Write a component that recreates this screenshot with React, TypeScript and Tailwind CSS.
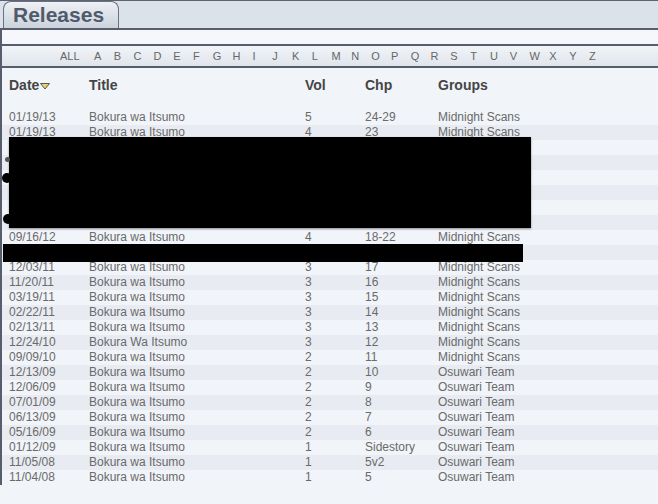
// Manga releases table with letter index and redacted rows.
const letters = 'ABCDEFGHIJKLMNOPQRSTUVWXYZ'.split('')

type Row = { date: string; title: string; vol: string; chp: string; group: string }

const MS = 'Midnight Scans'
const OT = 'Osuwari Team'
const BW = 'Bokura wa Itsumo'

const blank: Row = { date: '', title: '', vol: '', chp: '', group: '' }

const rows: Row[] = [
  { date: '01/19/13', title: BW, vol: '5', chp: '24-29', group: MS },
  { date: '01/19/13', title: BW, vol: '4', chp: '23', group: MS },
  blank,
  blank,
  blank,
  blank,
  blank,
  blank,
  { date: '09/16/12', title: BW, vol: '4', chp: '18-22', group: MS },
  blank,
  { date: '12/03/11', title: BW, vol: '3', chp: '17', group: MS },
  { date: '11/20/11', title: BW, vol: '3', chp: '16', group: MS },
  { date: '03/19/11', title: BW, vol: '3', chp: '15', group: MS },
  { date: '02/22/11', title: BW, vol: '3', chp: '14', group: MS },
  { date: '02/13/11', title: BW, vol: '3', chp: '13', group: MS },
  { date: '12/24/10', title: 'Bokura Wa Itsumo', vol: '3', chp: '12', group: MS },
  { date: '09/09/10', title: BW, vol: '2', chp: '11', group: MS },
  { date: '12/13/09', title: BW, vol: '2', chp: '10', group: OT },
  { date: '12/06/09', title: BW, vol: '2', chp: '9', group: OT },
  { date: '07/01/09', title: BW, vol: '2', chp: '8', group: OT },
  { date: '06/13/09', title: BW, vol: '2', chp: '7', group: OT },
  { date: '05/16/09', title: BW, vol: '2', chp: '6', group: OT },
  { date: '01/12/09', title: BW, vol: '1', chp: 'Sidestory', group: OT },
  { date: '11/05/08', title: BW, vol: '1', chp: '5v2', group: OT },
  { date: '11/04/08', title: BW, vol: '1', chp: '5', group: OT },
]

export default function App() {
  return (
    <div className="relative h-[504px] w-[658px] overflow-hidden bg-[#f1f4f9] font-['Liberation_Sans',Arial,sans-serif]">
      {/* Tab bar */}
      <div className="flex h-[28px] items-end border-t border-[#5d6372] bg-[#dce2ea] pl-[3px]">
        <div className="h-[27px] w-[116px] rounded-t-[8px] border border-b-0 border-[#6b7180] bg-gradient-to-b from-[#eef1f5] to-[#cbd3dd] pl-[9px] text-[21px] font-bold leading-[26px] text-[#505a6a]">
          Releases
        </div>
      </div>
      <div className="h-[2px] bg-[#575d6b]" />

      <div className="border-l-2 border-[#575d6b]">
        <div className="h-[14px] bg-[#f5f7fc]" />
        <div className="h-[2px] bg-[#575d6b]" />

        {/* Letter index */}
        <div className="flex h-[20px] items-center bg-gradient-to-b from-[#f1f4f8] to-[#e0e5ec] pl-[58px] text-[11px] text-[#666]">
          <span className="w-[34px]">ALL</span>
          {letters.map((l) => (
            <span key={l} className="w-[19.8px]">
              {l}
            </span>
          ))}
        </div>
        <div className="h-[2px] bg-[#575d6b]" />

        {/* Column headers */}
        <div className="flex h-[42px] items-start pl-[7px] pt-[9px] text-[14px] font-bold leading-[16px] text-[#454545]">
          <div className="flex w-[80px] items-center">
            Date
            <svg width="10" height="7" viewBox="0 0 10 7" className="ml-[1px] mt-[2px]">
              <polygon points="0.5,0.5 9.5,0.5 5,6" fill="#e6d46a" stroke="#555" strokeWidth="1" />
            </svg>
          </div>
          <div className="w-[216px]">Title</div>
          <div className="w-[60px]">Vol</div>
          <div className="w-[73px]">Chp</div>
          <div>Groups</div>
        </div>

        {/* Rows */}
        <div className="text-[12px] leading-[15px] text-[#6a6a6a]">
          {rows.map((r, i) => (
            <div key={i} className={`flex h-[15px] pl-[7px] ${i % 2 === 1 ? 'bg-[#e8ecf2]' : ''}`}>
              <div className="w-[80px]">{r.date}</div>
              <div className="w-[216px]">{r.title}</div>
              <div className="w-[60px]">{r.vol}</div>
              <div className="w-[73px]">{r.chp}</div>
              <div>{r.group}</div>
            </div>
          ))}
        </div>
      </div>

      {/* Redactions */}
      <div className="absolute left-[9px] top-[137px] h-[91px] w-[522px] bg-black shadow-[0_1px_2px_rgba(0,0,0,0.4)]" />
      <div className="absolute left-[3px] top-[244px] h-[18px] w-[520px] bg-black" />
      <div className="absolute left-[2px] top-[173px] h-[10px] w-[10px] rounded-full bg-black" />
      <div className="absolute left-[3px] top-[214px] h-[10px] w-[10px] rounded-full bg-black" />
      <div className="absolute left-[5px] top-[157px] h-[5px] w-[5px] rounded-full bg-[#555]" />
    </div>
  )
}
